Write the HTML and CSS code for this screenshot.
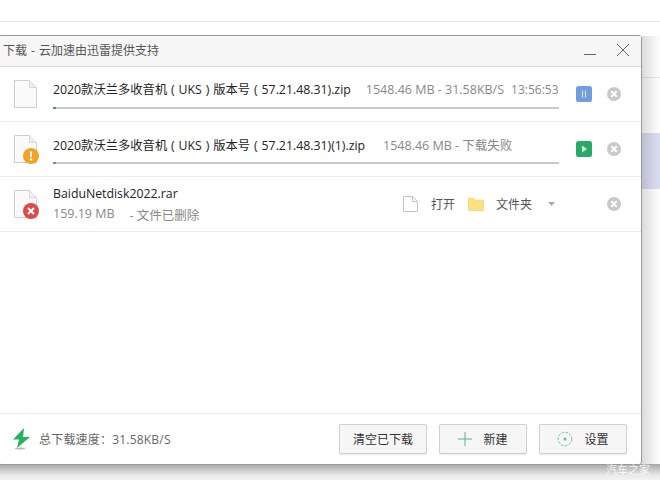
FILE: index.html
```html
<!DOCTYPE html>
<html lang="zh">
<head>
<meta charset="utf-8">
<title>下载</title>
<link rel="stylesheet" href="styles.css">
</head>
<body>
<div class="desk">
  <div class="bg-line bg-line-top"></div>
  <div class="bg-line bg-line-right"></div>
  <div class="bg-select"></div>
  <div class="bg-side"></div>
  <div class="bg-bottom"></div>

  <main class="window">
    <header class="titlebar">
      <span class="title">下载 - 云加速由迅雷提供支持</span>
      <div class="win-controls">
        <svg class="win-min" width="12" height="12" viewBox="0 0 12 12"><path d="M0 10.5h12" stroke="#666" fill="none"/></svg>
        <svg class="win-close" width="14" height="14" viewBox="0 0 14 14"><path d="M1 1l12 12M13 1L1 13" stroke="#666" stroke-width="1" fill="none"/></svg>
      </div>
    </header>

    <section class="list">
      <div class="row">
        <svg class="file" width="28" height="30" viewBox="0 0 28 30"><path d="M2.5 1.5h15l7 7v20h-22z" fill="#fafafa" stroke="#cfcfcf"/><path d="M17.5 1.5v7h7" fill="#eee" stroke="#d8d8d8"/></svg>
        <div class="info">
          <div class="line">
            <span class="name name-long">2020款沃兰多收音机 ( UKS ) 版本号 ( 57.21.48.31).zip</span>
            <span class="meta meta-first">1548.46 MB - 31.58KB/S</span>
            <span class="meta meta-time">13:56:53</span>
          </div>
          <div class="progress"><div class="progress-fill"></div></div>
        </div>
        <div class="action"><svg width="16" height="16" viewBox="0 0 16 16"><rect width="16" height="16" rx="2.5" fill="#6f9ed8"/><path d="M6.5 4.5v7M9.500 4.5v7" stroke="#cfe0f5" stroke-width="1.2"/></svg></div>
        <svg class="remove" width="14" height="14" viewBox="0 0 14 14"><circle cx="7" cy="7" r="7" fill="#c9c9c9"/><path d="M4.3 4.3l5.4 5.4M9.7 4.3l-5.4 5.4" stroke="#fff" stroke-width="2"/></svg>
      </div>

      <div class="row">
        <div class="file-wrap">
          <svg class="file" width="28" height="30" viewBox="0 0 28 30"><path d="M2.5 1.5h15l7 7v20h-22z" fill="#fafafa" stroke="#cfcfcf"/><path d="M17.5 1.5v7h7" fill="#eee" stroke="#d8d8d8"/></svg>
          <svg class="badge" width="16" height="16" viewBox="0 0 16 16"><circle cx="8" cy="8" r="8" fill="#f3a428"/><path d="M8 3.5v5.5" stroke="#fff" stroke-width="2"/><circle cx="8" cy="11.5" r="1.2" fill="#fff"/></svg>
        </div>
        <div class="info">
          <div class="line">
            <span class="name name-long">2020款沃兰多收音机 ( UKS ) 版本号 ( 57.21.48.31)(1).zip</span>
            <span class="meta meta-second">1548.46 MB - 下载失败</span>
          </div>
          <div class="progress"><div class="progress-fill progress-fill-gray"></div></div>
        </div>
        <div class="action"><svg width="16" height="16" viewBox="0 0 16 16"><rect width="16" height="16" rx="2.5" fill="#2aa866"/><path d="M6 4.5l5 3.5-5 3.500z" fill="#d9f5e4"/></svg></div>
        <svg class="remove" width="14" height="14" viewBox="0 0 14 14"><circle cx="7" cy="7" r="7" fill="#c9c9c9"/><path d="M4.3 4.3l5.4 5.4M9.7 4.3l-5.4 5.4" stroke="#fff" stroke-width="2"/></svg>
      </div>

      <div class="row">
        <div class="file-wrap">
          <svg class="file" width="28" height="30" viewBox="0 0 28 30"><path d="M2.5 1.5h15l7 7v20h-22z" fill="#fafafa" stroke="#cfcfcf"/><path d="M17.5 1.5v7h7" fill="#eee" stroke="#d8d8d8"/></svg>
          <svg class="badge" width="16" height="16" viewBox="0 0 16 16"><circle cx="8" cy="8" r="8" fill="#dd4a4a"/><path d="M5 5l6 6M11 5l-6 6" stroke="#fff" stroke-width="2"/></svg>
        </div>
        <div class="info info-done">
          <span class="name">BaiduNetdisk2022.rar</span>
          <div class="done-meta">
            <span class="meta">159.19 MB</span>
            <span class="meta">- 文件已删除</span>
          </div>
        </div>
        <div class="done-actions">
          <svg width="15" height="16" viewBox="0 0 15 16"><path d="M.5.5h9l5 5v10H.5z" fill="#fff" stroke="#c4c4c4"/><path d="M9.5.5v5h5" fill="none" stroke="#c4c4c4"/></svg>
          <span class="done-label open-label">打开</span>
          <svg class="folder" width="16" height="13" viewBox="0 0 16 13"><path d="M0 1a1 1 0 0 1 1-1h4l2 2h8a1 1 0 0 1 1 1v9a1 1 0 0 1-1 1H1a1 1 0 0 1-1-1z" fill="#fbe183" stroke="#e8c95c" stroke-width=".5"/></svg>
          <span class="done-label folder-label">文件夹</span>
          <svg class="caret" width="7" height="4" viewBox="0 0 7 4"><path d="M0 0h7L3.500 4z" fill="#aaa"/></svg>
        </div>
        <svg class="remove" width="14" height="14" viewBox="0 0 14 14"><circle cx="7" cy="7" r="7" fill="#c9c9c9"/><path d="M4.3 4.3l5.4 5.4M9.7 4.3l-5.4 5.4" stroke="#fff" stroke-width="2"/></svg>
      </div>
    </section>

    <footer class="footer">
      <svg class="bolt" width="18" height="22" viewBox="0 0 18 22"><path d="M11 0L0 11.500h6L4 20l13-11h-7z" fill="#25b35f"/><ellipse cx="7" cy="20.500" rx="5" ry="1" fill="#bbb"/></svg>
      <span class="speed">总下载速度：31.58KB/S</span>
      <div class="buttons">
        <button class="btn">清空已下载</button>
        <button class="btn"><svg class="btn-icon" width="14" height="14" viewBox="0 0 14 14"><path d="M7 0v14M0 7h14" stroke="#5cb592" fill="none"/></svg>新建</button>
        <button class="btn"><svg class="btn-icon" width="16" height="16" viewBox="0 0 16 16"><circle cx="8" cy="8" r="6.800" fill="none" stroke="#7cc9a4" stroke-dasharray="3 1"/><circle cx="8" cy="8" r="1.500" fill="#6bbf97"/></svg>设置</button>
      </div>
    </footer>
  </main>

  <div class="watermark">汽车之家</div>
</div>
</body>
</html>
```

FILE: styles.css
```css
* { box-sizing: border-box; }
html, body { margin: 0; padding: 0; }
body { background: #fff; font-family: "Open Sans", "Noto Sans CJK SC", sans-serif; overflow: hidden; }
.desk { position: relative; width: 660px; height: 480px; overflow: hidden; background: #fff; }

.bg-line { position: absolute; background: #e9e9e9; height: 1px; }
.bg-line-top { left: 0; top: 21px; width: 660px; }
.bg-line-right { left: 640px; top: 77px; width: 20px; }
.bg-select { position: absolute; left: 642px; top: 133px; width: 18px; height: 56px; background: #dcdff3; }
.bg-side { position: absolute; left: 642px; top: 36px; width: 18px; height: 430px; background: linear-gradient(90deg, rgba(0,0,0,.14), rgba(0,0,0,0)); }
.bg-bottom { position: absolute; left: 0; top: 464px; width: 660px; height: 16px; background: linear-gradient(180deg, #a8a8a8, #ececec 75%, #f2f2f2); }

.window { position: absolute; left: -2px; top: 35px; width: 644px; height: 430px; background: #fff; border: 1px solid #999; border-radius: 3px; display: flex; flex-direction: column; }

.titlebar { height: 31px; flex: none; background: #f6f6f6; border-bottom: 1px solid #dcdcdc; display: flex; align-items: center; justify-content: space-between; padding: 0 11px 2px 4px; }
.title { font-size: 12px; color: #555; word-spacing: 1px; }
.win-controls { display: flex; align-items: center; gap: 20px; }
.win-close { margin-top: -1px; }

.list { flex: 1; }
.row { height: 55px; border-bottom: 1px solid #ebebeb; display: flex; align-items: center; padding: 0 19px 0 13px; }
.file { display: block; flex: none; }
.file-wrap { position: relative; flex: none; width: 28px; height: 30px; }
.badge { position: absolute; left: 11px; top: 14px; }
.info { width: 506px; margin-left: 13px; flex: none; }
.line { display: flex; align-items: baseline; height: 20px; white-space: nowrap; }
.name { font-size: 12.300px; color: #222; }
.name-long { word-spacing: .7px; }
.meta { font-size: 12.500px; color: #888; }
.meta-first { margin-left: 15px; }
.meta-second { margin-left: 18px; }
.meta-time { margin-left: 7px; font-size: 12px; }
.progress { height: 2px; background: #c8c8c8; margin-top: 7px; }
.progress-fill { height: 100%; width: 3px; background: #3a9d7a; }
.progress-fill-gray { background: #888; }
.action { flex: none; width: 16px; height: 16px; margin-left: 17px; }
.action svg { display: block; }
.remove { flex: none; margin-left: 15px; }
.info-done { display: flex; flex-direction: column; gap: 3px; width: 342px; }
.done-meta { display: flex; gap: 15px; }
.done-actions { flex: none; display: flex; align-items: center; width: 195px; padding-left: 8px; }
.done-label { font-size: 12px; color: #555; }
.open-label { margin-left: 13px; }
.folder { margin-left: 13px; }
.folder-label { margin-left: 12px; }
.caret { margin-left: 16px; }
.row:last-child .remove { margin-left: 17px; }

.footer { height: 51px; flex: none; border-top: 1px solid #ebebeb; display: flex; align-items: center; padding: 0 14px 0 14px; }
.bolt { flex: none; }
.speed { font-size: 12px; letter-spacing: .2px; color: #666; margin-left: 8px; }
.buttons { margin-left: auto; display: flex; gap: 12px; }
.btn { width: 88px; height: 30px; padding: 0; background: #f6f6f6; border: 1px solid #cfcfcf; border-radius: 2px; font: 12px "Open Sans", "Noto Sans CJK SC", sans-serif; color: #333; display: flex; align-items: center; justify-content: center; box-shadow: 0 1px 1px rgba(0,0,0,.08); }
.btn-icon { margin-right: 11px; }

.watermark { position: absolute; left: 606px; top: 461px; font-size: 11px; color: #fff; opacity: .85; white-space: nowrap; }
```
